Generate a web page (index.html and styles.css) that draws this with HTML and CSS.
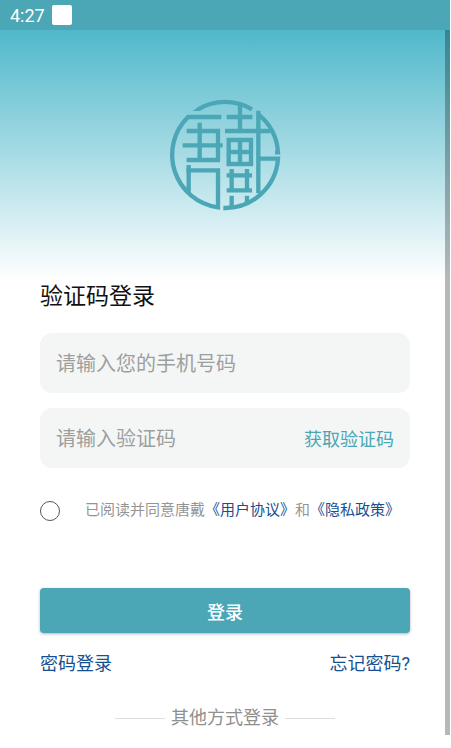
FILE: index.html
```html
<!DOCTYPE html>
<html lang="zh-CN">
<head>
    <meta charset="UTF-8">
    <meta name="viewport" content="width=device-width, initial-scale=1.0">
    <title>验证码登录</title>
    <link rel="stylesheet" href="styles.css">
</head>
<body>
    <div class="status-bar">
        <span class="status-time">4:27</span>
        <span class="status-icon"></span>
    </div>

    <div class="page">
        <header class="banner">
            <svg class="logo" viewBox="0 0 390 390" fill="none" stroke="currentColor" stroke-width="13" role="img" aria-label="唐戴">
                <!-- 外圈 -->
                <path d="M114 58 A159 159 0 0 1 276 58"/>
                <path d="M97 63 L112 53 L124 59 L118 63 Z" fill="currentColor" stroke="none"/>
                <path d="M184 81 H84 A159 159 0 0 0 174 352 V241 H86 V312"/>
                <path d="M86 225 V250"/>
                <path d="M295 310 V62 M295 73 A159 159 0 0 1 354 187 H345"/>
                <path d="M295 206 H354 A159 159 0 0 1 190 354"/>
                <!-- 唐 -->
                <path d="M80 123 H174 V210 M68 166 H188 M80 210 H180 M119 98 V210"/>
                <!-- 戴 -->
                <path d="M240 38 V118 M200 81 H277 M195 123 H331"/>
                <path d="M206 150 H273 V222 H206 Z M240 150 V222 M206 186 H273"/>
                <path d="M200 256 H276 M200 301 H276 M215 237 V301 M261 237 V301 M215 317 V351 M261 317 V340"/>
            </svg>
        </header>

        <form class="login-form">
            <h1>验证码登录</h1>

            <div class="field">
                <input type="tel" aria-label="手机号码" placeholder="请输入您的手机号码">
            </div>
            <div class="field">
                <input type="text" aria-label="验证码" placeholder="请输入验证码">
                <button type="button" class="code-btn">获取验证码</button>
            </div>

            <div class="agreement">
                <input type="checkbox" id="agree">
                <label for="agree">已阅读并同意唐戴<a href="#">《用户协议》</a>和<a href="#">《隐私政策》</a></label>
            </div>

            <button type="submit" class="login-btn">登录</button>

            <div class="links">
                <a href="#">密码登录</a>
                <a href="#">忘记密码?</a>
            </div>

            <div class="other-login">其他方式登录</div>
        </form>

        <div class="scrollbar"></div>
    </div>
</body>
</html>
```
FILE: styles.css
```css
* {
    box-sizing: border-box;
}

body {
    margin: 0 1px 0 0;
    background-color: #fff;
    font-family: Roboto, "Noto Sans CJK SC", sans-serif;
}

input,
button {
    font-family: inherit;
    border: none;
    padding: 0;
    background: none;
}

a {
    color: #17508f;
    text-decoration: none;
}

.status-bar {
    display: flex;
    align-items: center;
    gap: 7px;
    height: 30px;
    padding: 0 10px;
    background-color: #4ba6b6;
    color: #fff;
}

.status-time {
    font-size: 18px;
    font-weight: 400;
}

.status-icon {
    width: 20px;
    height: 20px;
    border-radius: 2px;
    background-color: #fff;
}

.page {
    position: relative;
}

.banner {
    display: flex;
    justify-content: center;
    padding: 60px 0;
    height: 250px;
    background-image: linear-gradient(#50b8ca, #fff);
}

.logo {
    width: 130px;
    height: 130px;
    color: #4ba6b6;
}

.login-form {
    display: flex;
    flex-direction: column;
    padding: 0 40px 4px;
}

h1 {
    margin: 0 0 19px;
    font-size: 23px;
    font-weight: 400;
    line-height: 34px;
    color: #111;
}

.field {
    display: flex;
    align-items: center;
    height: 60px;
    margin-bottom: 15px;
    padding: 0 16px;
    border-radius: 12px;
    background-color: #f4f6f6;
}

.field input {
    flex: 1;
    min-width: 0;
    height: 100%;
    padding-top: 2px;
    font-size: 20px;
    outline: none;
}

.field input::placeholder {
    color: #9d9f9f;
}

.code-btn {
    font-size: 18px;
    color: #4ba6b6;
}

.agreement {
    display: flex;
    align-items: center;
    gap: 25px;
    margin: 15px 0 65px;
    font-size: 15px;
    line-height: 25px;
    color: #959595;
}

.agreement label {
    white-space: nowrap;
}

.agreement input {
    appearance: none;
    flex: none;
    width: 20px;
    height: 20px;
    margin: 0;
    border: 1px solid #555;
    border-radius: 50%;
}

.agreement input:checked {
    background-color: #4ba6b6;
}

.login-btn {
    height: 45px;
    border-radius: 4px;
    background-color: #4ba6b6;
    box-shadow: 0 1px 3px rgba(0, 0, 0, 0.3);
    font-size: 18px;
    font-weight: 500;
    color: #fff;
}

.links {
    display: flex;
    justify-content: space-between;
    margin: 18px 0 28px;
    font-size: 18px;
    line-height: 26px;
}

.other-login {
    display: flex;
    align-items: center;
    justify-content: center;
    gap: 6px;
    font-size: 18px;
    line-height: 26px;
    color: #8f8f8f;
}

.other-login::before,
.other-login::after {
    content: "";
    width: 50px;
    height: 1px;
    background-color: #ddd;
}

.scrollbar {
    position: absolute;
    top: 0;
    right: 0;
    bottom: 0;
    width: 5px;
    background-color: rgba(0, 0, 0, 0.28);
}
```
